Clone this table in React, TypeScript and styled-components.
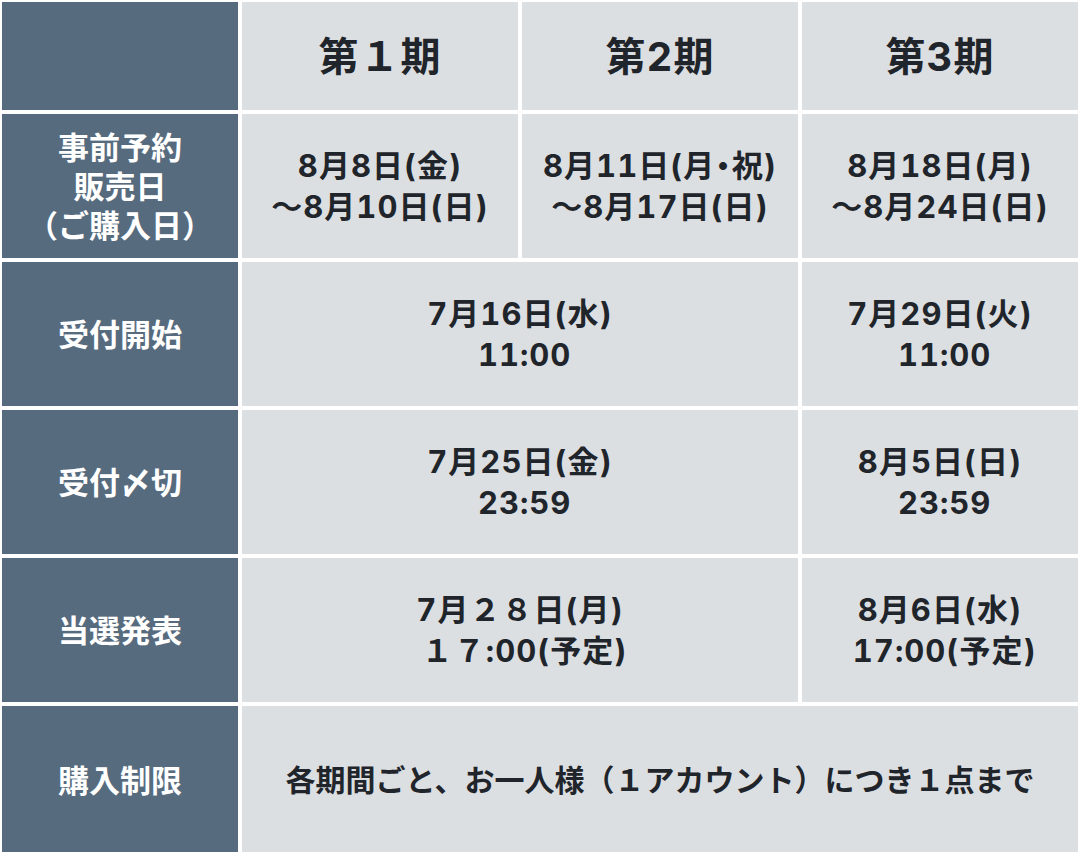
import React from "react";
import styled, { createGlobalStyle } from "styled-components";

const GlobalStyle = createGlobalStyle`
  html, body {
    margin: 0;
    padding: 0;
    background: #ffffff;
  }
  body {
    font-family: Inter, "Noto Sans CJK JP", "Noto Sans", sans-serif;
    overflow: hidden;
  }
`;

const Table = styled.div`
  display: grid;
  grid-template-columns: 236px repeat(3, 276px);
  grid-template-rows: 108px repeat(4, 144px) 148px;
  gap: 4px;
  padding: 2px 2px 0;
  background: #ffffff;
  width: 1080px;
  box-sizing: border-box;
`;

const Cell = styled.div<{ $head?: boolean; $span?: number; $palt?: boolean }>`
  display: flex;
  align-items: center;
  justify-content: center;
  text-align: center;
  white-space: pre-wrap;
  font-family: Inter, "Noto Sans CJK JP", "Noto Sans", sans-serif;
  font-weight: 700;
  font-size: 31px;
  line-height: 41px;
  letter-spacing: 1px;
  font-variant-numeric: tabular-nums;
  background: ${(p) => (p.$head ? "#576b7e" : "#dcdfe2")};
  color: ${(p) => (p.$head ? "#ffffff" : "#1f252a")};
  grid-column: ${(p) => (p.$span ? `span ${p.$span}` : "auto")};
  font-feature-settings: ${(p) => (p.$palt ? '"palt" 1, "tnum" 1' : '"tnum" 1')};
`;

const RowHead = styled(Cell).attrs({ $head: true })`
  font-size: 31px;
  line-height: 39px;
  letter-spacing: 0;
`;

const PeriodHead = styled(Cell)`
  font-size: 40px;
  letter-spacing: 1px;
`;

const NoteCell = styled(Cell)`
  font-size: 30px;
  letter-spacing: 0;
`;

const rows: { label: string; cells: { text: string; span?: number; palt?: boolean }[] }[] = [
  {
    label: "事前予約\n販売日\n（ご購入日）",
    cells: [
      { text: "8月8日(金)\n〜8月10日(日)" },
      { text: "8月11日(月・祝)\n〜8月17日(日)", palt: true },
      { text: "8月18日(月)\n〜8月24日(日)" },
    ],
  },
  {
    label: "受付開始",
    cells: [
      { text: "7月16日(水)\n 11:00", span: 2 },
      { text: "7月29日(火)\n 11:00" },
    ],
  },
  {
    label: "受付〆切",
    cells: [
      { text: "7月25日(金)\n 23:59", span: 2 },
      { text: "8月5日(日)\n 23:59" },
    ],
  },
  {
    label: "当選発表",
    cells: [
      { text: "7月２８日(月)\n １７:00(予定)", span: 2 },
      { text: "8月6日(水)\n 17:00(予定)" },
    ],
  },
];

export default function App() {
  return (
    <>
      <GlobalStyle />
      <Table>
        <Cell $head />
        <PeriodHead>第１期</PeriodHead>
        <PeriodHead>第2期</PeriodHead>
        <PeriodHead>第3期</PeriodHead>
        {rows.map((r) => (
          <React.Fragment key={r.label}>
            <RowHead>{r.label}</RowHead>
            {r.cells.map((c, i) => (
              <Cell key={i} $span={c.span} $palt={c.palt}>
                {c.text}
              </Cell>
            ))}
          </React.Fragment>
        ))}
        <RowHead>購入制限</RowHead>
        <NoteCell $span={3}>各期間ごと、お一人様（１アカウント）につき１点まで</NoteCell>
      </Table>
    </>
  );
}
